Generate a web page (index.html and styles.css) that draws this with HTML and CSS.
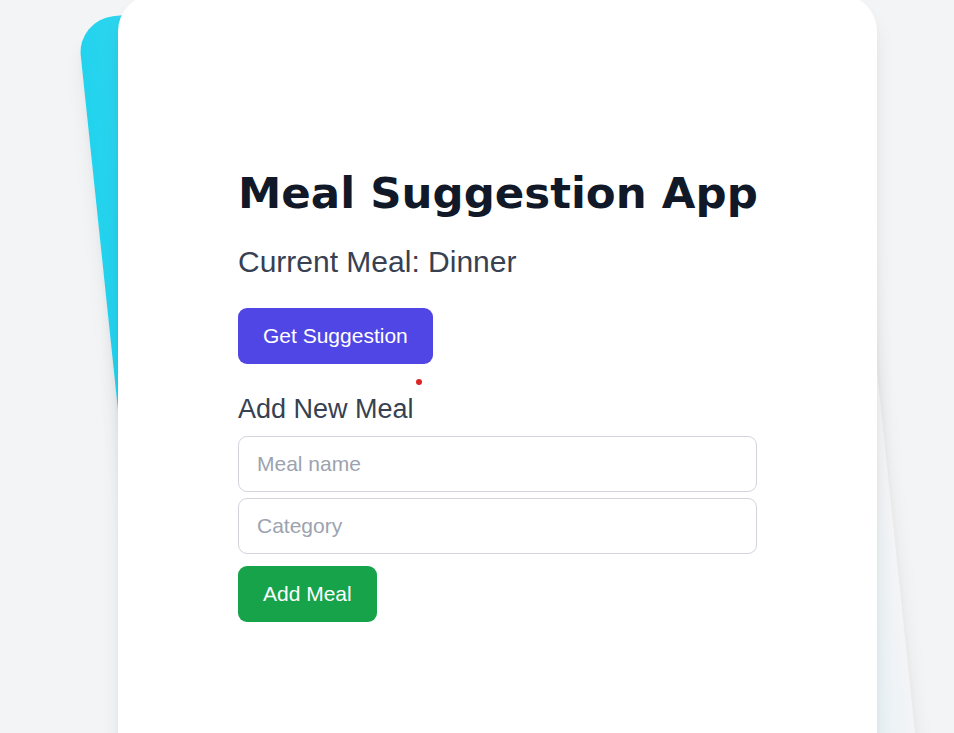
FILE: index.html
```html
<!DOCTYPE html>
<html lang="en">
<head>
<meta charset="utf-8">
<title>Meal Suggestion App</title>
<link rel="stylesheet" href="styles.css">
</head>
<body>
  <div class="page">
    <div class="stack">
      <div class="backdrop"></div>
      <div class="card">
        <h1 class="title">Meal Suggestion App</h1>
        <p class="current">Current Meal: Dinner</p>
        <button class="btn btn-primary" type="button">Get Suggestion</button>
        <h2 class="section">Add New Meal</h2>
        <input class="field" type="text" placeholder="Meal name">
        <input class="field" type="text" placeholder="Category">
        <button class="btn btn-success btn-add" type="button">Add Meal</button>
      </div>
      <span class="dot"></span>
    </div>
  </div>
</body>
</html>
```
FILE: styles.css
```css
html, body {
  margin: 0;
  padding: 0;
  overflow: hidden;
  height: 100%;
}

body {
  background: #f3f4f6;
  font-family: "Liberation Sans", Arial, sans-serif;
}

.page {
  padding-left: 118px;
}

.stack {
  position: relative;
  width: 759px;
  margin-top: -23px;
  padding: 18px 0;
}

.backdrop {
  position: absolute;
  left: -41px;
  top: 43px;
  width: 100%;
  height: 950px;
  border-radius: 36px;
  background: linear-gradient(to right, #22d3ee, rgba(34, 211, 238, 0));
  box-shadow: 0 15px 22px -4px rgba(0, 0, 0, 0.1), 0 6px 9px -3px rgba(0, 0, 0, 0.05);
  transform-origin: top left;
  transform: rotate(-6deg);
}

.card {
  position: relative;
  box-sizing: border-box;
  height: 820px;
  padding: 171px 120px 0;
  background: #ffffff;
  border-radius: 36px;
  box-shadow: 0 15px 22px -4px rgba(0, 0, 0, 0.1), 0 6px 9px -3px rgba(0, 0, 0, 0.05);
}

.title {
  margin: 0;
  font-family: "DejaVu Sans", "Liberation Sans", Arial, sans-serif;
  font-size: 43.5px;
  line-height: 54px;
  font-weight: 700;
  color: #111827;
  white-space: nowrap;
}

.current {
  margin: 21px 0 0;
  font-size: 30px;
  line-height: 42px;
  color: #374151;
}

.btn {
  display: block;
  margin-top: 25px;
  padding: 13px 25px;
  border: 0;
  border-radius: 9px;
  font-family: "Liberation Sans", Arial, sans-serif;
  font-size: 21px;
  line-height: 30px;
  color: #ffffff;
  cursor: pointer;
}

.btn-primary {
  background: #4f46e5;
}

.btn-success {
  background: #16a34a;
}

.btn-add {
  margin-top: 12px;
}

.section {
  margin: 24px 0 0;
  font-size: 27px;
  line-height: 42px;
  font-weight: 400;
  color: #374151;
}

.field {
  display: block;
  box-sizing: border-box;
  width: 100%;
  height: 56px;
  margin-top: 6px;
  padding: 0 18px;
  border: 1.5px solid #d1d5db;
  border-radius: 9px;
  background: #ffffff;
  font-family: "Liberation Sans", Arial, sans-serif;
  font-size: 21px;
  color: #374151;
  outline: none;
}

.field::placeholder {
  color: #9ca3af;
}

.dot {
  position: absolute;
  top: 402px;
  left: 298px;
  width: 6px;
  height: 6px;
  border-radius: 50%;
  background: #dc2626;
}
```
